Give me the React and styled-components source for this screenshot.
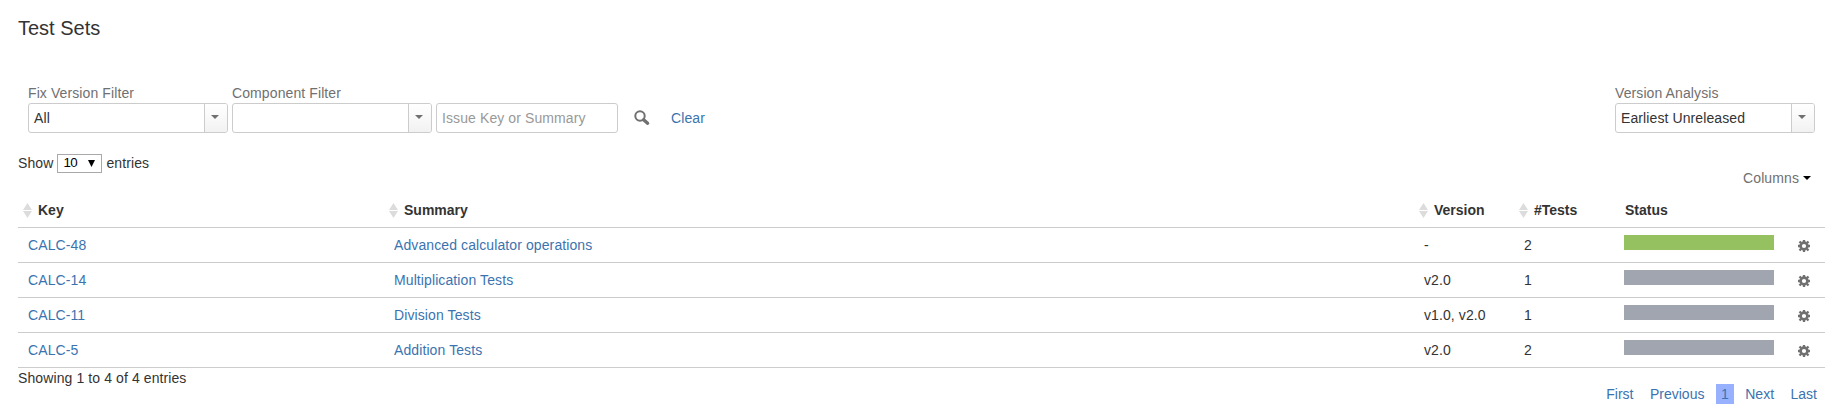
// React
import { useState } from "react";

// Libraries
import styled, { createGlobalStyle } from "styled-components";

const GlobalStyle = createGlobalStyle`
    * {
        box-sizing: border-box;
    }

    body {
        margin: 0;
        background: #fff;
        color: #333;
        font-family: "Liberation Sans", Arial, sans-serif;
        font-size: 14px;
        line-height: 20px;
        letter-spacing: .1px;
    }

    a {
        color: #3b73af;
        text-decoration: none;
    }
`;

const Page = styled.main`
    padding: 13px 15px 0 18px;
`;
const Title = styled.h1`
    margin: 0 0 40px;
    font-size: 20px;
    font-weight: normal;
    line-height: 30px;
    letter-spacing: 0;
`;
const Filters = styled.div`
    display: flex;
    align-items: flex-end;
    gap: 4px;
    padding: 0 10px;
`;
const Field = styled.label`
    display: block;
    width: 200px;
    margin-left: ${({ $right }) => ($right ? "auto" : "0")};
    color: #707070;
`;
const SelectBox = styled.span`
    display: flex;
    height: 30px;
    border: 1px solid #ccc;
    border-radius: 3px;
    overflow: hidden;
    color: #333;
    line-height: 28px;
`;
const SelectValue = styled.span`
    flex: 1;
    padding-left: 5px;
`;
const SelectArrow = styled.span`
    display: flex;
    justify-content: center;
    width: 23px;
    padding: 11px 2px 0 0;
    border-left: 1px solid #ccc;
    background: linear-gradient(#fff, #f2f2f2);
`;
const Caret = styled.span`
    width: 0;
    height: 0;
    border: 4px solid transparent;
    border-top-color: ${({ $color }) => $color || "#707070"};
    border-bottom: none;
`;
const SearchInput = styled.input`
    width: 182px;
    height: 30px;
    padding: 0 5px;
    border: 1px solid #ccc;
    border-radius: 3px;
    color: #333;
    font: inherit;
    letter-spacing: inherit;

    &::placeholder {
        color: #999;
    }
`;
const SearchBtn = styled.button`
    display: flex;
    align-items: center;
    height: 30px;
    margin-left: 12px;
    padding: 0;
    border: none;
    background: none;
`;
const Clear = styled.a`
    margin-left: 17px;
    line-height: 30px;
`;
const Length = styled.div`
    display: flex;
    align-items: center;
    margin-top: 20px;
`;
const LengthSelect = styled.span`
    display: flex;
    align-items: center;
    justify-content: space-between;
    width: 45px;
    height: 19px;
    margin: 0 4px;
    padding: 0 6px 0 5px;
    border: 1px solid #a9a9a9;
    color: #000;
    font-size: 13.33px;
    letter-spacing: -.5px;
`;
const Columns = styled.div`
    display: flex;
    align-items: center;
    justify-content: flex-end;
    gap: 4px;
    margin: -5px 0 5px;
    padding-right: 14px;
    color: #707070;
`;
const Table = styled.table`
    width: 100%;
    table-layout: fixed;
    border-collapse: separate;
    border-spacing: 0;
`;
const Col = styled.col`
    width: ${({ $width }) => $width};
`;
const Th = styled.th`
    height: 35px;
    padding: 0 0 0 ${({ $sortable }) => ($sortable ? "5px" : "11px")};
    border-bottom: 1px solid #ccc;
    letter-spacing: 0;
    text-align: left;
`;
const ThInner = styled.span`
    display: flex;
    align-items: center;
    gap: 6px;
`;
const Td = styled.td`
    height: 35px;
    padding: 0 0 0 10px;
    border-bottom: 1px solid #ccc;
`;
const ActionTd = styled(Td)`
    padding: 2px 0 0 14px;
`;
const StatusBar = styled.div`
    width: 150px;
    height: 15px;
    margin-bottom: 5px;
    background: ${({ $passed }) => ($passed ? "#95c160" : "#a1a5af")};
`;
const Icon = styled.svg`
    display: block;
`;
const Footer = styled.div`
    display: flex;
    justify-content: space-between;
`;
const Pagination = styled.nav`
    display: flex;
    gap: 6.5px;
    margin-top: 16px;
    padding-right: 3px;
    letter-spacing: 0;
`;
const PageLink = styled.a`
    padding: 0 5px;
    background: ${({ $active }) => ($active ? "#97b1fe" : "none")};
`;

const columns = [
    { label: "Key", width: "366px", sortable: true },
    { label: "Summary", width: "1030px", sortable: true },
    { label: "Version", width: "100px", sortable: true },
    { label: "#Tests", width: "100px", sortable: true },
    { label: "Status", width: "170px" },
    { label: "", width: "auto" },
];

const testSets = [
    { key: "CALC-48", summary: "Advanced calculator operations", version: "-", tests: 2, passed: true },
    { key: "CALC-14", summary: "Multiplication Tests", version: "v2.0", tests: 1 },
    { key: "CALC-11", summary: "Division Tests", version: "v1.0, v2.0", tests: 1 },
    { key: "CALC-5", summary: "Addition Tests", version: "v2.0", tests: 2 },
];

const SortIcon = () => (
    <Icon width="9" height="15" viewBox="0 0 9 15" fill="#dcdcdc">
        <path d="M4.5 0 9 7H0zM0 8h9l-4.5 7z"/>
    </Icon>
);

const SearchIcon = () => (
    <Icon width="16" height="16" viewBox="0 0 16 16" fill="none" stroke="#707070">
        <circle cx="6" cy="6" r="4.7" strokeWidth="2"/>
        <path d="M9.6 9.8l4 3.4" strokeWidth="3.4" strokeLinecap="round"/>
    </Icon>
);

const GearIcon = () => (
    <Icon width="12" height="12" viewBox="0 0 12 12" fill="none" stroke="#707070">
        <circle cx="6" cy="6" r="3.4" strokeWidth="2.6"/>
        <path d="M6 0v2M6 10v2M0 6h2M10 6h2M1.5 1.5l1.6 1.6M8.9 8.9l1.6 1.6M1.5 10.5l1.6-1.6M8.9 3.1l1.6-1.6" strokeWidth="2.3"/>
    </Icon>
);

function SelectField({ label, value, right }){
    return (
        <Field $right={right}>
            {label}
            <SelectBox>
                <SelectValue>{value}</SelectValue>
                <SelectArrow><Caret/></SelectArrow>
            </SelectBox>
        </Field>
    )
}

export default function App(){
    const [search, setSearch] = useState("");

    return (
        <>
            <GlobalStyle/>
            <Page>
                <Title>Test Sets</Title>
                <Filters>
                    <SelectField label="Fix Version Filter" value="All"/>
                    <SelectField label="Component Filter" value=""/>
                    <SearchInput
                        placeholder="Issue Key or Summary"
                        value={search}
                        onChange={(e) => setSearch(e.target.value)}
                    />
                    <SearchBtn aria-label="Search"><SearchIcon/></SearchBtn>
                    <Clear href="#" onClick={() => setSearch("")}>Clear</Clear>
                    <SelectField label="Version Analysis" value="Earliest Unreleased" right/>
                </Filters>
                <Length>
                    Show
                    <LengthSelect>
                        10
                        <Icon width="7" height="7" viewBox="0 0 7 7"><path d="M0 0h7L3.5 7z"/></Icon>
                    </LengthSelect>
                    entries
                </Length>
                <Columns>
                    Columns
                    <Caret $color="#000"/>
                </Columns>
                <Table>
                    <colgroup>
                        {columns.map(({ label, width }) => <Col key={label} $width={width}/>)}
                    </colgroup>
                    <thead>
                        <tr>
                            {columns.map(({ label, sortable }) => (
                                <Th key={label} $sortable={sortable}>
                                    <ThInner>
                                        {sortable && <SortIcon/>}
                                        {label}
                                    </ThInner>
                                </Th>
                            ))}
                        </tr>
                    </thead>
                    <tbody>
                        {testSets.map(({ key, summary, version, tests, passed }) => (
                            <tr key={key}>
                                <Td><a href="#">{key}</a></Td>
                                <Td><a href="#">{summary}</a></Td>
                                <Td>{version}</Td>
                                <Td>{tests}</Td>
                                <Td><StatusBar $passed={passed}/></Td>
                                <ActionTd><GearIcon/></ActionTd>
                            </tr>
                        ))}
                    </tbody>
                </Table>
                <Footer>
                    <span>Showing 1 to 4 of 4 entries</span>
                    <Pagination>
                        <PageLink href="#">First</PageLink>
                        <PageLink href="#">Previous</PageLink>
                        <PageLink href="#" $active>1</PageLink>
                        <PageLink href="#">Next</PageLink>
                        <PageLink href="#">Last</PageLink>
                    </Pagination>
                </Footer>
            </Page>
        </>
    )
}
